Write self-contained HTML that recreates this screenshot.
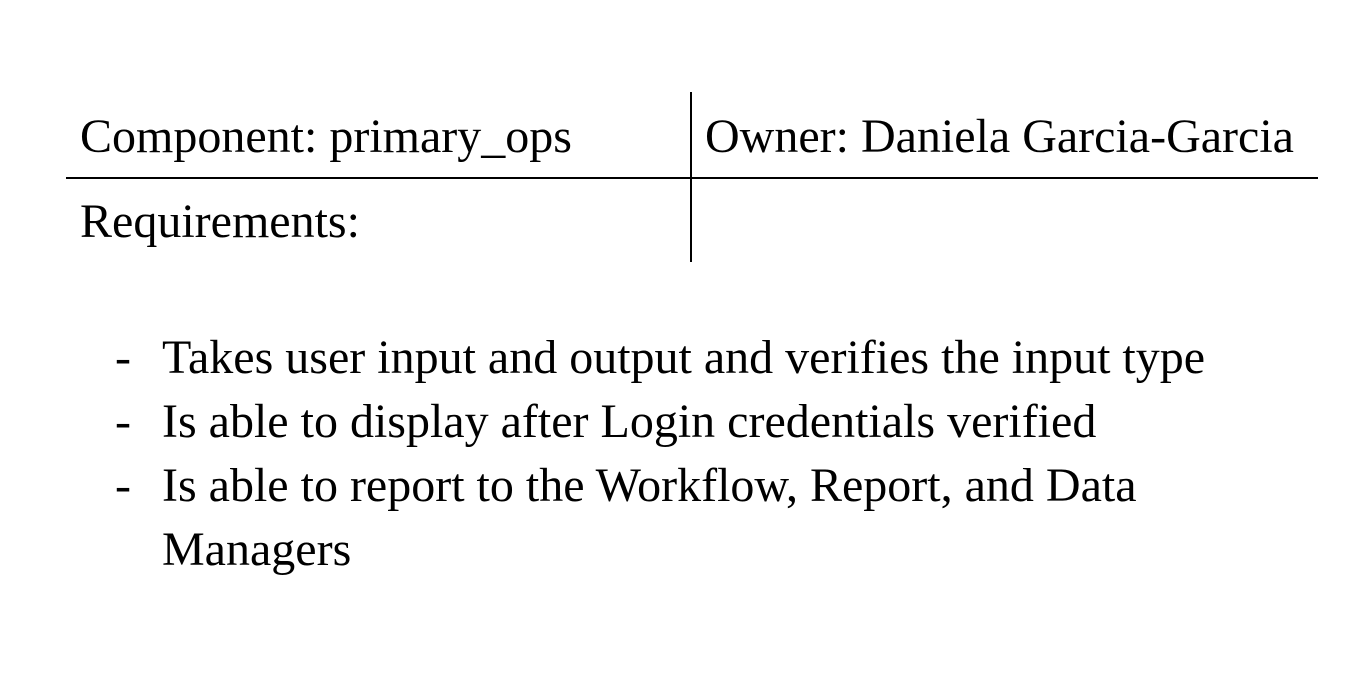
<!DOCTYPE html>
<html><head><style>
body{margin:0;width:1357px;height:684px;background:#fff;font-family:"Liberation Serif",serif;color:#000;position:relative;overflow:hidden}
.t{position:absolute;font-size:48px;line-height:1;white-space:nowrap}
.h{position:absolute;background:#000;height:2px}
.v{position:absolute;background:#000;width:2px}
</style></head><body>
<div class="v" style="left:690px;top:92px;height:170px"></div>
<div class="h" style="left:66px;top:177px;width:1252px"></div>
<div class="t" style="left:80px;top:113px">Component: primary_ops</div>
<div class="t" style="left:705px;top:113px">Owner: Daniela Garcia-Garcia</div>
<div class="t" style="left:80px;top:198px">Requirements:</div>
<div class="t" style="left:115px;top:334px">-</div>
<div class="t" style="left:162px;top:334px">Takes user input and output and verifies the input type</div>
<div class="t" style="left:115px;top:398px">-</div>
<div class="t" style="left:162px;top:398px">Is able to display after Login credentials verified</div>
<div class="t" style="left:115px;top:462px">-</div>
<div class="t" style="left:162px;top:462px">Is able to report to the Workflow, Report, and Data</div>
<div class="t" style="left:162px;top:526px">Managers</div>
</body></html>
